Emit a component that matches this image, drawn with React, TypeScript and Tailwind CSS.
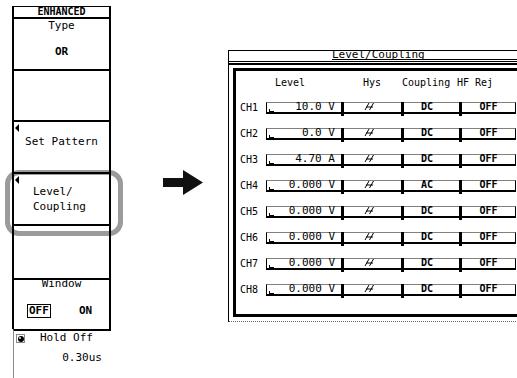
const mono = "font-['DejaVu_Sans_Mono','Liberation_Mono',monospace]";

const rows = [
  { ch: "CH1", level: "10.0 V", coupling: "DC" },
  { ch: "CH2", level: "0.0 V", coupling: "DC" },
  { ch: "CH3", level: "4.70 A", coupling: "DC" },
  { ch: "CH4", level: "0.000 V", coupling: "AC" },
  { ch: "CH5", level: "0.000 V", coupling: "DC" },
  { ch: "CH6", level: "0.000 V", coupling: "DC" },
  { ch: "CH7", level: "0.000 V", coupling: "DC" },
  { ch: "CH8", level: "0.000 V", coupling: "DC" },
];

function KeyMark() {
  // little left-pointing triangle in the corner of a soft key
  return (
    <div className="absolute left-[1px] top-[2px] w-0 h-0 border-y-[4px] border-y-transparent border-r-[4px] border-r-black" />
  );
}

function SoftKeys() {
  return (
    <div className="relative z-10 ml-[12px] mt-[6px] w-[99px] h-[372px] shrink-0 flex flex-col text-[11px]">
      {/* header */}
      <div className="h-[11px] border-t border-x-2 border-black text-center text-[10px] leading-[10px] font-bold">
        ENHANCED
      </div>

      {/* Type */}
      <div className="h-[52px] border-t-2 border-x-2 border-black text-center leading-[12px]">
        <div className="mt-[1px]">Type</div>
        <div className="mt-[14px] font-bold">OR</div>
      </div>

      <div className="h-[51px] border-t-2 border-x-2 border-black" />

      {/* Set Pattern */}
      <div className="relative h-[52px] border-t-2 border-x-2 border-black text-center leading-[12px] pt-[14px]">
        <KeyMark />
        Set Pattern
      </div>

      {/* Level/Coupling */}
      <div className="relative h-[52px] border-t-2 border-x-2 border-black leading-[15px] pt-[10px] pl-[19px]">
        <KeyMark />
        <div>Level/</div>
        <div>Coupling</div>
      </div>

      <div className="h-[54px] border-t-2 border-x-2 border-black" />

      {/* Window */}
      <div className="h-[51px] border-t-2 border-x-2 border-black">
        <div className="text-center leading-[8px]">Window</div>
        <div className="flex items-center mt-[16px] ml-[13px]">
          <span className="border border-black px-[1px] h-[14px] leading-[12px] font-bold">OFF</span>
          <span className="ml-[28px] font-bold leading-[12px]">ON</span>
        </div>
      </div>

      {/* Hold Off */}
      <div className="flex-1 border-t-2 border-t-black border-l border-l-[#8a8a8a] ml-[1px]">
        <div className="flex items-center pt-[1px] leading-[12px]">
          <svg width="9" height="9" viewBox="0 0 9 9" className="ml-[2px]">
            <rect x="0.5" y="0.5" width="8" height="8" fill="none" stroke="#888" />
            <circle cx="5" cy="5" r="3" fill="#000" />
            <circle cx="4" cy="4" r="0.9" fill="#fff" />
          </svg>
          <span className="ml-[15px]">Hold Off</span>
        </div>
        <div className="mt-[8px] pr-[9px] text-right leading-[12px]">0.30us</div>
      </div>
    </div>
  );
}

function Arrow() {
  return (
    <svg width="40" height="25" viewBox="0 0 40 25" className="ml-[52px] mt-[170px] shrink-0">
      <polygon points="0,8 20,8 20,0 40,12.5 20,25 20,17 0,17" fill="#111" />
    </svg>
  );
}

function HysMark() {
  return (
    <svg width="11" height="9" viewBox="0 0 11 9" className="ml-[20px] mb-[1px]">
      <path d="M1 8 L5 1 M5.5 8 L9.5 1 M2 5 H9" stroke="#000" strokeWidth="1" fill="none" />
    </svg>
  );
}

function LevelWindow() {
  return (
    <div className="ml-[25px] mt-[50px] w-[300px] shrink-0 border-l border-t border-black flex flex-col text-[11px]">
      {/* title bar */}
      <div className="flex h-[9px]">
        <div className="w-[103px]" />
        <div className="flex-1 border-b border-black leading-[8px]">Level/Coupling</div>
      </div>
      <div className="h-[1px]" />
      <div className="h-[1px] bg-black" />
      <div className="h-[1px]" />
      <div className="h-[2px] bg-black" />

      {/* table frame */}
      <div className="ml-[4px] mt-[3px] h-[249px] border-t-[3px] border-l-[3px] border-b-[3px] border-black text-[10px]">
        <div className="flex mt-[6px] leading-[12px]">
          <div className="w-[39px]" />
          <div className="w-[88px]">Level</div>
          <div className="w-[39px]">Hys</div>
          <div className="w-[55px]">Coupling</div>
          <div>HF Rej</div>
        </div>

        <div className="flex flex-col gap-[12px] mt-[13px]">
          {rows.map((r) => (
            <div key={r.ch} className="flex items-start h-[14px]">
              <div className="w-[30px] pl-[4px] leading-[12px]">{r.ch}</div>
              <div className="relative w-[75px] h-[12px] flex items-end justify-end pr-[6px] text-[11px] leading-[10px] border-l border-l-black border-t border-t-[#808080] border-b-2 border-b-black">
                <div className="absolute left-[2px] bottom-0 w-[5px] h-[3px] border-l border-b border-black" />
                {r.level}
              </div>
              <div className="w-[3px] h-[14px] bg-black" />
              <div className="w-[57px] h-[12px] flex items-end border-t border-t-[#808080] border-b-2 border-b-black">
                <HysMark />
              </div>
              <div className="w-[3px] h-[14px] bg-black" />
              <div className="w-[55px] h-[12px] flex items-end pl-[17px] leading-[10px] font-bold border-t border-t-[#808080] border-b-2 border-b-black">
                {r.coupling}
              </div>
              <div className="w-[3px] h-[14px] bg-black" />
              <div className="w-[54px] h-[12px] flex items-end justify-center leading-[10px] font-bold border-t border-t-[#808080] border-b-2 border-b-black border-r border-r-black">
                OFF
              </div>
            </div>
          ))}
        </div>
      </div>

      <div className="mt-[4px] h-0 border-t border-dotted border-[#666]" />
    </div>
  );
}

export default function App() {
  return (
    <div className={`relative flex items-start w-[517px] h-[378px] overflow-hidden bg-white text-black ${mono}`}>
      {/* gray highlight around the Level/Coupling key */}
      <div className="absolute left-[5px] top-[170px] w-[118px] h-[66px] rounded-[14px] border-[5px] border-[#9b9b9b]" />
      <SoftKeys />
      <Arrow />
      <LevelWindow />
    </div>
  );
}
